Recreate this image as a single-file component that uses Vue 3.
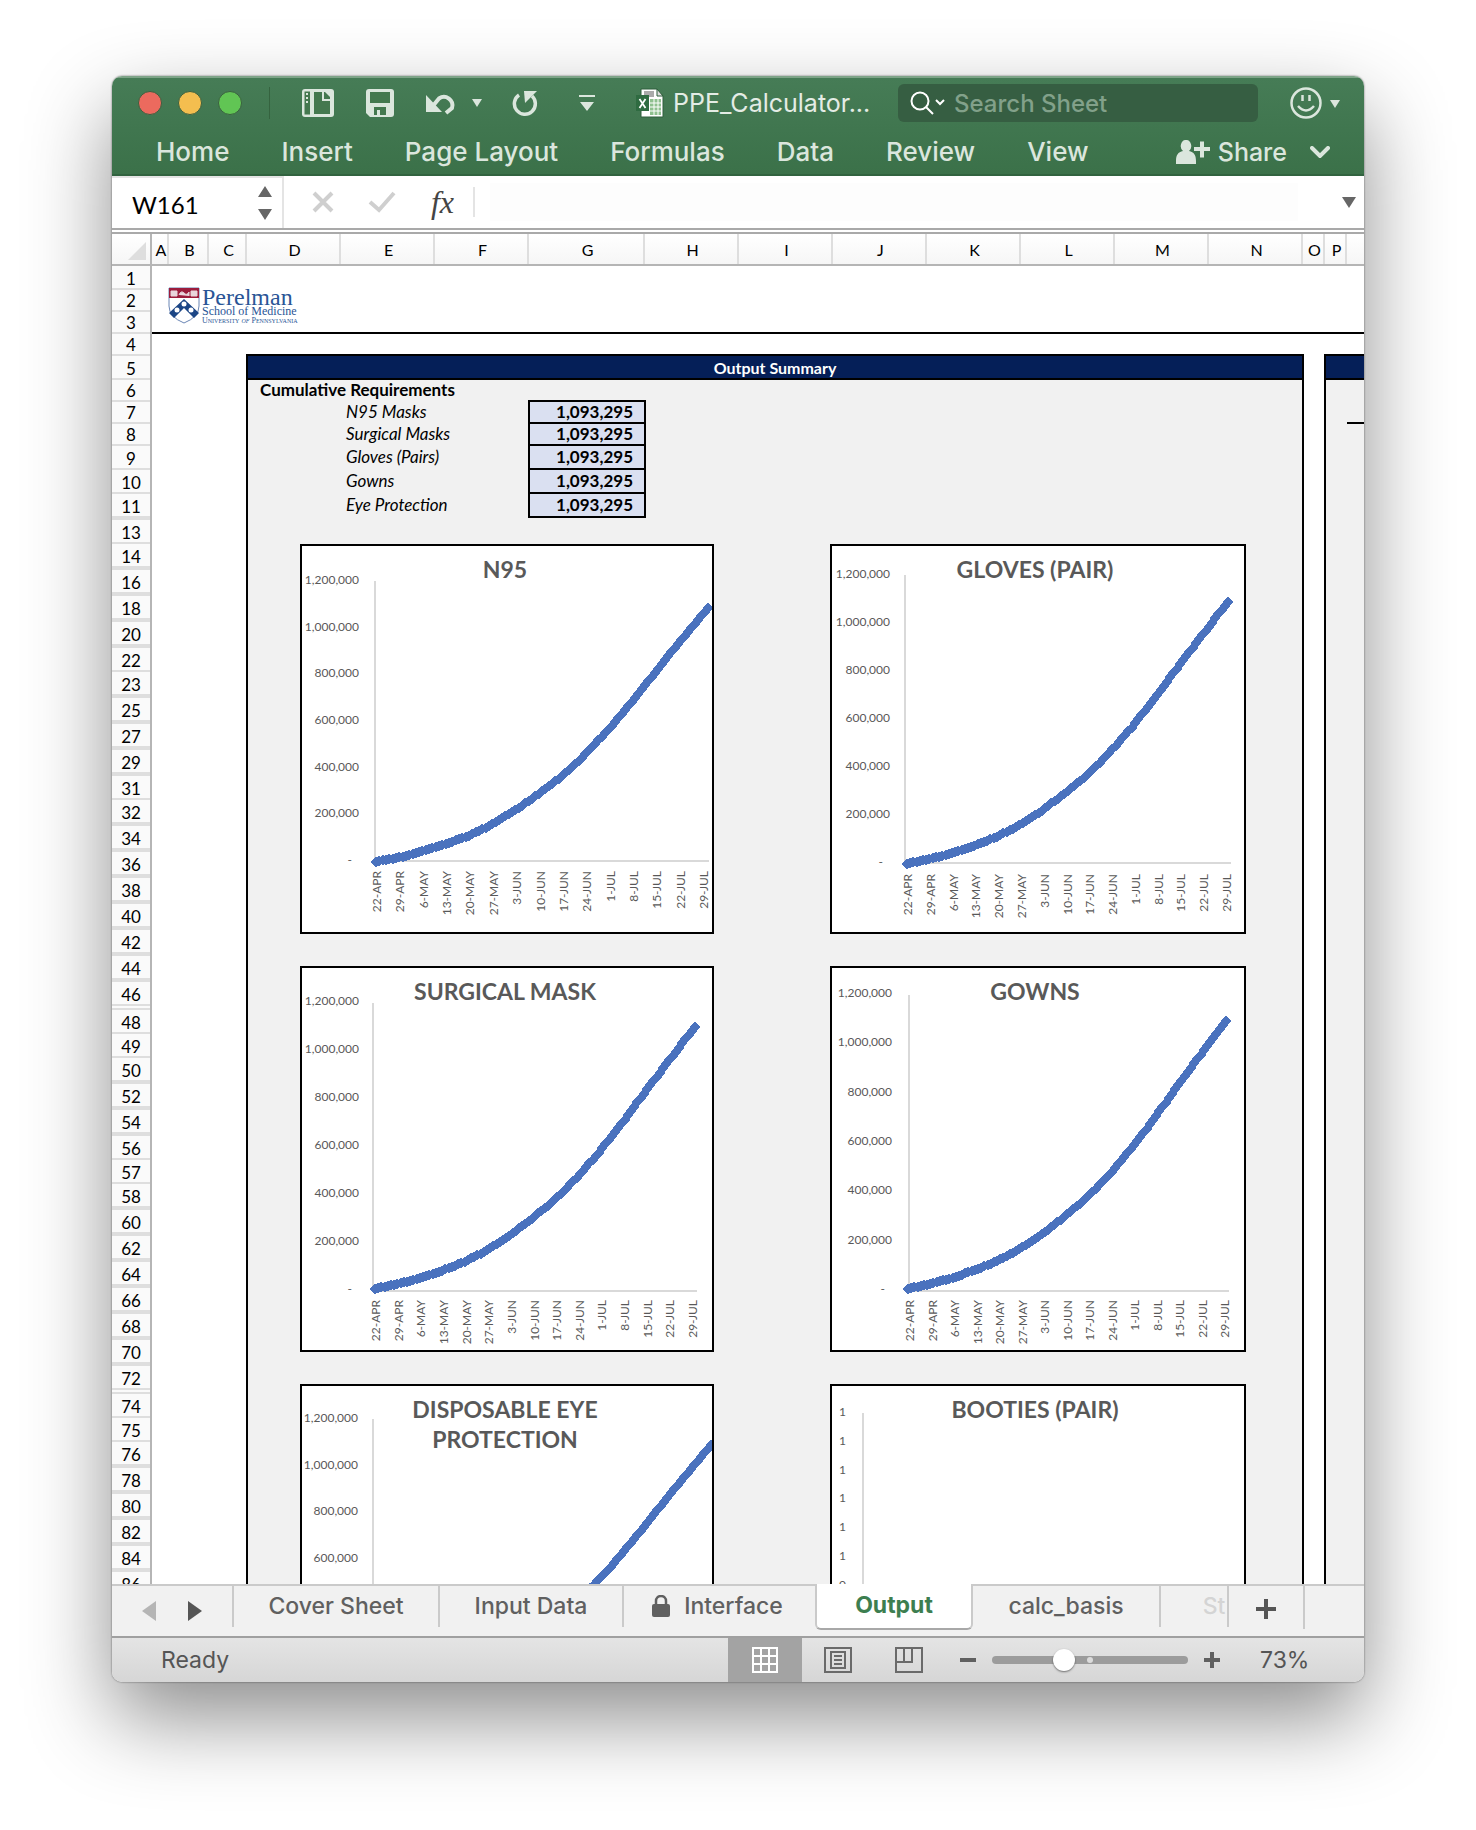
<script setup>
import { ref } from 'vue'

const ribbonTabs = ['Home', 'Insert', 'Page Layout', 'Formulas', 'Data', 'Review', 'View']

const columns = [
  ['A', 17], ['B', 40], ['C', 38], ['D', 94], ['E', 94], ['F', 94], ['G', 116], ['H', 94],
  ['I', 94], ['J', 94], ['K', 94], ['L', 94], ['M', 94], ['N', 94], ['O', 22], ['P', 22], ['', 94],
].map(([label, width]) => ({ label, width }))

// Row headers: "short" rows are less tall; "gap" and "wide" mark hidden rows below.
const shortRows = [2, 3, 4, 6, 7, 8]
const wideRows = [46, 72]
const visibleRows = [
  1, 2, 3, 4, 5, 6, 7, 8, 9, 10, 11, 13, 14, 16, 18, 20, 22, 23, 25, 27, 29, 31, 32, 34, 36, 38,
  40, 42, 44, 46, 48, 49, 50, 52, 54, 56, 57, 58, 60, 62, 64, 66, 68, 70, 72, 74, 75, 76, 78, 80,
  82, 84, 86,
]
const rows = visibleRows.map((n, i) => {
  const hiddenBelow = visibleRows[i + 1] !== n + 1
  return {
    n,
    kind: shortRows.includes(n) ? 'short' : wideRows.includes(n) ? 'wide' : hiddenBelow ? 'gap' : '',
  }
})

const requirements = [
  ['N95 Masks', '1,093,295'],
  ['Surgical Masks', '1,093,295'],
  ['Gloves (Pairs)', '1,093,295'],
  ['Gowns', '1,093,295'],
  ['Eye Protection', '1,093,295'],
]

const dates = [
  '22-APR', '29-APR', '6-MAY', '13-MAY', '20-MAY', '27-MAY', '3-JUN', '10-JUN',
  '17-JUN', '24-JUN', '1-JUL', '8-JUL', '15-JUL', '22-JUL', '29-JUL',
]
const amounts = ['1,200,000', '1,000,000', '800,000', '600,000', '400,000', '200,000', '-']
const weekly = [2, 20, 46, 77, 114, 162, 223, 294, 371, 464, 571, 690, 817, 941, 1062, 1180]

function valueAt(day) {
  const i = Math.floor(day / 7)
  const t = day / 7 - i
  return weekly[i] * (1 - t) + weekly[i + 1] * t
}

function series(x0, x1, y0, y1) {
  const pts = []
  for (let day = 0; day <= 100; day++) {
    const x = Math.round(x0 + ((x1 - x0) * day) / 100)
    const y = Math.round(y0 - ((y0 - y1) * valueAt(day)) / 1096)
    pts.push([x, y])
  }
  return pts
}

const charts = [
  { title: ['N95'], w: 410, h: 386, axis: [73, 35, 315, 407], labels: [57, 34, 314], dates: [75, 402, 325], line: [74, 406, 316, 62] },
  { title: ['GLOVES (PAIR)'], w: 412, h: 386, axis: [73, 29, 317, 399], labels: [58, 28, 316], dates: [76, 395, 328], line: [75, 396, 318, 56] },
  { title: ['SURGICAL MASK'], w: 410, h: 382, axis: [71, 35, 323, 395], labels: [57, 33, 321], dates: [74, 391, 332], line: [73, 393, 321, 59] },
  { title: ['GOWNS'], w: 412, h: 382, axis: [77, 27, 323, 397], labels: [60, 25, 321], dates: [78, 393, 332], line: [76, 394, 321, 53] },
  { title: ['DISPOSABLE EYE', 'PROTECTION'], w: 410, h: 386, axis: [71, 33, 313, 407], labels: [56, 32, 312], dates: [75, 402, 325], line: [74, 409, 314, 59] },
  { title: ['BOOTIES (PAIR)'], w: 412, h: 386, axis: [31, 27, 315, 399], labels: [14, 26, 314], ticks: ['1', '1', '1', '1', '1', '1', '0', '0', '0', '0', '-'] },
].map((c) => {
  const ticks = c.ticks || amounts
  const [right, first, last] = c.labels
  const points = c.line ? series(...c.line) : []
  return {
    ...c,
    yLabels: ticks.map((text, i) => ({
      text,
      x: text === '-' ? right - 7 : right,
      y: Math.round(first + ((last - first) * i) / (ticks.length - 1)) + 4,
    })),
    xLabels: c.dates
      ? dates.map((text, i) => ({ text, x: Math.round(c.dates[0] + ((c.dates[1] - c.dates[0]) * i) / 14) + 4, y: c.dates[2] }))
      : [],
    path: points.map(([x, y]) => `M${x - 5} ${y}l5 -5l5 5l-5 5z`).join(''),
  }
})

const zoom = ref(35)
</script>

<template>
  <div class="page">
    <main class="window">
      <header class="titlebar">
        <div class="tools">
          <div class="lights">
            <button class="light close" aria-label="Close"></button>
            <button class="light minimize" aria-label="Minimize"></button>
            <button class="light full" aria-label="Full screen"></button>
          </div>
          <span class="tool-divider"></span>
          <button class="tool sidebar" aria-label="Workbook gallery">
            <svg width="32" height="28" viewBox="0 0 32 28"><rect width="32" height="28" rx="3" fill="#dbe6dd" /><path d="M8 2.500V25.500H2.500V2.500zM12 3h8v9h8v13H12z" fill="#44784f" /><path d="M22 3h1l5 5v2h-6z" fill="#44784f" /><path d="M4 5h2M4 9h2M4 13h2" stroke="#dbe6dd" stroke-width="2" /></svg>
          </button>
          <button class="tool save" aria-label="Save">
            <svg width="28" height="28" viewBox="0 0 28 28"><path d="M3 0h22a3 3 0 0 1 3 3v22a3 3 0 0 1-3 3H4l-4-4V3a3 3 0 0 1 3-3z" fill="#dbe6dd" /><path d="M4 3h20v11H4zM8 18h12v8h-6v-5h-3v5H8z" fill="#44784f" /></svg>
          </button>
          <button class="tool undo" aria-label="Undo">
            <svg width="31" height="24" viewBox="0 0 31 24"><path d="M6 16L13 7.500A8.500 8.500 0 0 1 26 17L20 22" fill="none" stroke="#dbe6dd" stroke-width="4" /><path d="M0 4v17h16z" fill="#dbe6dd" /></svg>
          </button>
          <button class="tool undo-more" aria-label="Undo history">
            <svg width="10" height="8" viewBox="0 0 10 8"><path d="M0 0h10L5 8z" fill="#dbe6dd" /></svg>
          </button>
          <button class="tool redo" aria-label="Repeat">
            <svg width="26" height="28" viewBox="0 0 26 28"><path d="M7 6A10.500 10.500 0 1 0 20 7" fill="none" stroke="#dbe6dd" stroke-width="3.500" /><path d="M12 2h13L13 14z" fill="#dbe6dd" /></svg>
          </button>
          <button class="tool customize" aria-label="Customize toolbar">
            <svg width="16" height="16" viewBox="0 0 16 16"><path d="M0 0h16v2H0zM1 7h14L8 16z" fill="#dbe6dd" /></svg>
          </button>
          <svg class="doc" width="28" height="30" viewBox="0 0 28 30"><path d="M5 1h16l6 7v21H5z" fill="#fff" stroke="#2f5f3c" /><path d="M8 3h10v6H8z" fill="#aaa" /><path d="M21 1v7h6z" fill="#ddd" stroke="#2f5f3c" /><path d="M14 11h11v16H14z" fill="#8fc08f" /><path d="M18 11v16M22 11v16M14 15h11M14 19h11M14 23h11" stroke="#fff" /><path d="M0 7h13v16H0z" fill="#2f6b41" /><path d="M3.500 11l6 9M9.500 11l-6 9" stroke="#fff" stroke-width="1.800" /></svg>
          <h1 class="doc-title">PPE_Calculator...</h1>
          <label class="search">
            <svg width="36" height="24" viewBox="0 0 36 24"><circle cx="10" cy="10" r="8.500" fill="none" stroke="#fff" stroke-width="2" /><path d="M16 16l7 7M26 9l4 4l4-4" fill="none" stroke="#fff" stroke-width="2" /></svg>
            <input type="search" placeholder="Search Sheet" aria-label="Search Sheet" />
          </label>
          <button class="tool smile" aria-label="Feedback">
            <svg width="50" height="32" viewBox="0 0 50 32"><circle cx="16" cy="16" r="14.500" fill="none" stroke="#dbe6dd" stroke-width="2.500" /><path d="M12.500 8v6M19.500 8v6M8 19q8 9 16 0" fill="none" stroke="#dbe6dd" stroke-width="2.500" /><path d="M40 13h10l-5 8z" fill="#dbe6dd" /></svg>
          </button>
        </div>
        <nav class="ribbon">
          <button v-for="t in ribbonTabs" :key="t" class="ribbon-tab">{{ t }}</button>
          <button class="share">
            <svg width="34" height="24" viewBox="0 0 34 24"><path d="M10 0a5 6 0 0 1 3 11c5 1 7 4 7 10v3H0v-3c0-6 2-9 7-10A5 6 0 0 1 10 0z" fill="#dbe6dd" /><path d="M18 9h16M26 1.500v16" stroke="#dbe6dd" stroke-width="4" /></svg>
            Share
          </button>
          <button class="collapse" aria-label="Collapse ribbon">
            <svg width="20" height="12" viewBox="0 0 20 12"><path d="M2 2l8 8l8-8" fill="none" stroke="#dbe6dd" stroke-width="4" stroke-linecap="round" /></svg>
          </button>
        </nav>
      </header>

      <section class="formula-bar">
        <div class="name-box">
          <input class="cell-name" value="W161" aria-label="Name box" />
          <svg width="14" height="34" viewBox="0 0 14 34"><path d="M0 11L7 0l7 11zM0 23h14L7 34z" fill="#666" /></svg>
        </div>
        <button class="fx-btn cancel" aria-label="Cancel">
          <svg width="22" height="22" viewBox="0 0 22 22"><path d="M2 2l18 18M20 2L2 20" stroke="#cfcfcf" stroke-width="4" /></svg>
        </button>
        <button class="fx-btn accept" aria-label="Enter">
          <svg width="28" height="22" viewBox="0 0 28 22"><path d="M2 11l9 8L26 2" fill="none" stroke="#cfcfcf" stroke-width="4" /></svg>
        </button>
        <button class="fx">fx</button>
        <input class="formula" aria-label="Formula" />
        <button class="expand" aria-label="Expand formula bar">
          <svg width="14" height="11" viewBox="0 0 14 11"><path d="M0 0h14L7 11z" fill="#666" /></svg>
        </button>
      </section>

      <section class="sheet">
        <div class="col-heads">
          <div class="corner"><svg width="18" height="18" viewBox="0 0 18 18"><path d="M18 0v18H0z" fill="#dedede" /></svg></div>
          <div v-for="(c, i) in columns" :key="i" class="col-head" :style="{ width: c.width + 'px' }">{{ c.label }}</div>
        </div>
        <div class="sheet-body">
          <div class="row-heads">
            <div v-for="r in rows" :key="r.n" class="row-head" :class="r.kind"><span>{{ r.n }}</span></div>
          </div>
          <div class="canvas">
            <div class="brand">
              <svg width="130" height="38" viewBox="0 0 130 38">
                <path d="M1 1h30v18q0 11-15 17q-15-6-15-17z" fill="#fff" stroke="#6b86b5" />
                <path d="M1 1h30v10H1z" fill="#9c1c3c" />
                <path d="M3 4h6v5H3zM23 4h6v5h-6zM11 8q2-5 5-2t5-1v4" fill="#e9d5dc" stroke="#e9d5dc" />
                <path d="M16 12L31 26l-5 5L16 21L6 31L1 26z" fill="#1b4585" />
                <circle cx="16" cy="17" r="2.500" fill="#fff" /><circle cx="9" cy="23" r="2.500" fill="#fff" /><circle cx="23" cy="23" r="2.500" fill="#fff" />
                <text x="34" y="18" font-size="24">Perelman</text>
                <text x="34" y="28" font-size="12">School of Medicine</text>
                <text x="34" y="36" font-size="8" class="small-caps">University <tspan font-style="italic">of</tspan> Pennsylvania</text>
              </svg>
            </div>
            <div class="panels">
              <section class="panel">
                <h2 class="panel-title">Output Summary</h2>
                <h3 class="panel-sub">Cumulative Requirements</h3>
                <table class="requirements">
                  <tbody>
                    <tr v-for="(r, i) in requirements" :key="r[0]" :class="{ tall: i > 1 }">
                      <th scope="row">{{ r[0] }}</th>
                      <td>{{ r[1] }}</td>
                    </tr>
                  </tbody>
                </table>
                <div class="charts">
                  <figure v-for="c in charts" :key="c.title[0]" class="chart">
                    <svg :width="c.w" :height="c.h" :viewBox="`0 0 ${c.w} ${c.h}`">
                      <path :d="`M${c.axis[0]} ${c.axis[1]}V${c.axis[2]}H${c.axis[3]}`" fill="none" stroke="#d9d9d9" stroke-width="2" />
                      <text v-for="(l, i) in c.yLabels" :key="'y' + i" class="tick" :x="l.x" :y="l.y" text-anchor="end">{{ l.text }}</text>
                      <text v-for="l in c.xLabels" :key="l.text" class="tick" text-anchor="end" :transform="`translate(${l.x} ${l.y}) rotate(-90)`">{{ l.text }}</text>
                      <path :d="c.path" fill="#4a72be" stroke="#4a72be" />
                      <text v-for="(t, i) in c.title" :key="t" class="chart-title" x="203" :y="32 + i * 30" text-anchor="middle">{{ t }}</text>
                    </svg>
                  </figure>
                </div>
              </section>
              <section class="panel side">
                <div class="panel-title"></div>
                <div class="side-rule"></div>
              </section>
            </div>
          </div>
        </div>
      </section>

      <nav class="tabs">
        <div class="tab-nav">
          <button aria-label="Previous sheet"><svg width="14" height="20" viewBox="0 0 14 20"><path d="M14 0v20L0 10z" fill="#b5b5b5" /></svg></button>
          <button aria-label="Next sheet"><svg width="14" height="20" viewBox="0 0 14 20"><path d="M0 0v20l14-10z" fill="#555" /></svg></button>
        </div>
        <button class="tab cover">Cover Sheet</button>
        <button class="tab input-data">Input Data</button>
        <button class="tab interface">
          <svg width="18" height="22" viewBox="0 0 18 22"><path d="M4 10V6a5 5 0 0 1 10 0v4" fill="none" stroke="#606060" stroke-width="2.500" /><rect y="9" width="18" height="13" rx="2" fill="#606060" /></svg>
          Interface
        </button>
        <button class="tab active">Output</button>
        <button class="tab calc">calc_basis</button>
        <button class="tab more">St</button>
        <button class="tab add" aria-label="New sheet"><svg width="20" height="20" viewBox="0 0 20 20"><path d="M0 10h20M10 0v20" stroke="#555" stroke-width="4" /></svg></button>
      </nav>

      <footer class="status">
        <span class="ready">Ready</span>
        <button class="view selected" aria-label="Normal view"><svg width="26" height="26" viewBox="0 0 26 26"><path d="M1 1h24v24H1zM9 1v24M17 1v24M1 9h24M1 17h24" fill="none" stroke="#fff" stroke-width="2" /></svg></button>
        <button class="view" aria-label="Page layout"><svg width="28" height="26" viewBox="0 0 28 26"><path d="M1 1h26v24H1zM7 5h14v16H7zM10 9h8M10 13h8M10 17h8" fill="none" stroke="#6a6a6a" stroke-width="2" /></svg></button>
        <button class="view" aria-label="Page break preview"><svg width="28" height="26" viewBox="0 0 28 26"><path d="M1 1h26v24H1zM1 15h16V1M9 1v14" fill="none" stroke="#6a6a6a" stroke-width="2" /></svg></button>
        <button class="step" aria-label="Zoom out"><svg width="16" height="16" viewBox="0 0 16 16"><path d="M0 8h16" stroke="#606060" stroke-width="4" /></svg></button>
        <label class="slider"><input v-model="zoom" type="range" min="0" max="100" aria-label="Zoom" /><i></i></label>
        <button class="step" aria-label="Zoom in"><svg width="16" height="16" viewBox="0 0 16 16"><path d="M0 8h16M8 0v16" stroke="#606060" stroke-width="4" /></svg></button>
        <span class="percent">73%</span>
      </footer>
    </main>
  </div>
</template>

<style>
body {
  margin: 0;
  background: #fff;
}
</style>

<style scoped>
* {
  box-sizing: border-box;
}
svg {
  display: block;
  flex: none;
}
button,
input {
  margin: 0;
  padding: 0;
  border: 0;
  background: none;
  font: inherit;
  color: inherit;
  outline: none;
}
h1,
h2,
h3,
figure {
  margin: 0;
}
.page {
  height: 100vh;
  padding: 76px 112px 148px;
  overflow: hidden;
}
.window {
  display: flex;
  flex-direction: column;
  height: 100%;
  border-radius: 10px;
  overflow: hidden;
  background: #fff;
  font-family: Inter, "Liberation Sans", sans-serif;
  box-shadow: 0 0 2px rgba(0, 0, 0, 0.6), 0 36px 84px rgba(0, 0, 0, 0.45);
}

/* Title bar and ribbon */
.titlebar {
  flex: none;
  height: 100px;
  background: linear-gradient(#467c56, #3b7149);
  border-top: 2px solid #7ea488;
  border-bottom: 2px solid #31633f;
  color: #dbe6dd;
}
.tools {
  display: flex;
  align-items: center;
  height: 50px;
  padding-left: 26px;
}
.lights {
  display: flex;
  gap: 16px;
}
.light {
  width: 24px;
  height: 24px;
  border-radius: 50%;
  border: 1px solid #3a6040;
}
.close { background: #ec6a5e; }
.minimize { background: #f4be4f; }
.full { background: #61c554; }
.tool-divider {
  width: 1px;
  height: 32px;
  margin: 0 32px 0 27px;
  background: #35633f;
}
.save { margin-left: 32px; }
.undo { margin-left: 32px; }
.undo-more { margin-left: 15px; }
.redo { margin-left: 30px; }
.customize { margin-left: 41px; }
.doc { margin-left: 41px; }
.doc-title {
  flex: 1;
  margin-left: 9px;
  font-size: 25px;
  line-height: 30px;
  font-weight: 400;
  color: #e4ece5;
  white-space: nowrap;
}
.search {
  display: flex;
  align-items: center;
  width: 360px;
  height: 38px;
  padding-left: 12px;
  border-radius: 6px;
  background: #365e42;
}
.search input {
  flex: 1;
  min-width: 0;
  margin-left: 8px;
  font-size: 24px;
  font-weight: 500;
}
.search input::placeholder {
  color: #82a18a;
  opacity: 1;
}
.smile { margin: 0 24px 0 32px; }
.ribbon {
  display: flex;
  align-items: center;
  height: 48px;
  padding-left: 18px;
  font-size: 26px;
  line-height: 30px;
  font-weight: 500;
}
.ribbon-tab {
  padding: 0 26px;
  white-space: nowrap;
}
.share {
  display: flex;
  align-items: center;
  gap: 8px;
  margin-left: auto;
  font-size: 25px;
}
.collapse { margin: 0 34px 0 23px; }

/* Formula bar */
.formula-bar {
  display: flex;
  flex: none;
  align-items: center;
  height: 52px;
  color: #000;
}
.name-box {
  display: flex;
  align-items: center;
  width: 172px;
  height: 52px;
  padding: 0 10px 0 20px;
  border: solid #e4e4e4;
  border-width: 2px 2px 0 0;
}
.cell-name {
  flex: 1;
  min-width: 0;
  padding-top: 2px;
  font-family: Lato, sans-serif;
  font-size: 24px;
}
.cancel { margin-left: 28px; }
.accept { margin-left: 34px; }
.fx {
  width: 48px;
  height: 30px;
  margin-left: 31px;
  padding-right: 15px;
  border-right: 2px solid #e4e4e4;
  font: italic 32px/26px "Liberation Serif", serif;
  color: #444;
}
.formula {
  flex: 1;
  min-width: 0;
  height: 38px;
  margin: 0 44px 0 15px;
  background: #fdfdfd;
}
.expand { margin-right: 8px; }

/* Sheet */
.sheet {
  display: flex;
  flex: 1;
  flex-direction: column;
  min-height: 0;
  overflow: hidden;
  border-top: 6px double #a9a9a9;
  font-family: Lato, sans-serif;
}
.col-heads {
  display: flex;
  flex: none;
  height: 32px;
  border-bottom: 2px solid #b5b5b5;
  background: linear-gradient(#fff, #f6f6f6);
  overflow: hidden;
}
.corner {
  display: flex;
  flex: none;
  align-items: flex-end;
  justify-content: flex-end;
  width: 40px;
  padding: 0 4px 4px 0;
  border-right: 2px solid #b5b5b5;
}
.col-head {
  flex: none;
  padding-left: 3px;
  border-right: 2px solid #dedede;
  font-size: 16px;
  line-height: 32px;
  text-align: center;
  white-space: nowrap;
}
.sheet-body {
  display: flex;
  flex: 1;
  min-height: 0;
  overflow: hidden;
}
.row-heads {
  flex: none;
  width: 40px;
  border-right: 2px solid #b5b5b5;
  background: #fafafa;
}
.row-head {
  display: flex;
  align-items: flex-end;
  height: 24px;
  border-bottom: 2px solid #dedede;
  font-size: 17px;
  line-height: 18px;
}
.row-head span {
  width: 100%;
  text-align: center;
}
.row-head.short { height: 22px; }
.row-head.gap {
  height: 26px;
  border-bottom-width: 4px;
}
.row-head.wide {
  height: 28px;
  border-bottom: 6px double #dedede;
}
.canvas {
  display: flex;
  flex: 1;
  flex-direction: column;
  min-width: 0;
  background: #fff;
}
.brand {
  flex: none;
  height: 68px;
  padding: 21px 0 0 16px;
  border-bottom: 2px solid #000;
}
.brand text {
  font-family: "Liberation Serif", serif;
  fill: #2a5596;
}
.brand .small-caps { font-variant: small-caps; }
.panels {
  display: flex;
  flex: 1;
  gap: 20px;
  min-height: 0;
  padding: 20px 0 0 94px;
}
.panel {
  flex: none;
  width: 1058px;
  border: solid #000;
  border-width: 2px 2px 0;
  background: #f1f1f1;
}
.panel.side {
  flex: 1;
  width: auto;
  border-right: 0;
}
.panel-title {
  height: 24px;
  border-bottom: 2px solid #000;
  background: #051f58;
  color: #fff;
  font-size: 16px;
  line-height: 24px;
  font-weight: 700;
  text-align: center;
}
.side-rule {
  height: 44px;
  margin-left: 21px;
  border-bottom: 2px solid #000;
}
.panel-sub {
  height: 20px;
  padding-left: 12px;
  font-size: 17px;
  line-height: 20px;
  font-weight: 700;
}
.requirements {
  margin-left: 98px;
  border-collapse: collapse;
  font-size: 17px;
  line-height: 20px;
}
.requirements tr { height: 22px; }
.requirements tr.tall { height: 24px; }
.requirements th {
  width: 183px;
  padding: 0;
  font-style: italic;
  font-weight: 400;
  text-align: left;
}
.requirements td {
  width: 116px;
  padding: 0 11px 0 0;
  border: 2px solid #000;
  background: #dae0f1;
  font-weight: 700;
  text-align: right;
}
.charts {
  display: grid;
  grid-template-columns: auto auto;
  gap: 32px 116px;
  justify-content: start;
  margin: 26px 0 0 52px;
}
.chart {
  border: 2px solid #000;
  background: #fff;
}
.tick {
  font-size: 12px;
  fill: #595959;
}
.chart-title {
  font-size: 23px;
  font-weight: 700;
  fill: #595959;
}

/* Sheet tabs */
.tabs {
  display: flex;
  flex: none;
  height: 52px;
  background: #f1f1f1;
  color: #606060;
  font-size: 23px;
  line-height: 28px;
}
.tab-nav {
  display: flex;
  align-items: center;
  gap: 32px;
  width: 120px;
  padding-left: 30px;
  border-top: 2px solid #cacaca;
}
.tab {
  display: flex;
  align-items: center;
  justify-content: center;
  gap: 14px;
  height: 43px;
  padding-bottom: 2px;
  border: solid #cacaca;
  border-width: 2px 0 0 2px;
  font-weight: 500;
  white-space: nowrap;
}
.cover { width: 206px; }
.input-data { width: 184px; }
.interface {
  width: 193px;
  padding-right: 4px;
}
.tab.active {
  width: 158px;
  height: 46px;
  border-width: 0 2px 2px;
  border-radius: 0 0 6px 6px;
  border-bottom-color: #a8a8a8;
  background: #fff;
  color: #3d7e50;
  font-weight: 700;
}
.calc {
  width: 186px;
  border-left: 0;
}
.more {
  width: 68px;
  padding-left: 40px;
  color: #d4d4d4;
  overflow: hidden;
}
.add {
  width: 76px;
  padding-top: 6px;
}
.tabs::after {
  content: "";
  flex: 1;
  height: 43px;
  border: solid #cacaca;
  border-width: 2px 0 0 2px;
}

/* Status bar */
.status {
  display: flex;
  flex: none;
  align-items: center;
  height: 46px;
  border-top: 2px solid #a0a0a0;
  background: linear-gradient(#e4e4e4, #d6d6d6);
  color: #555;
  font-size: 23px;
}
.ready {
  flex: 1;
  padding-left: 49px;
}
.view {
  display: flex;
  align-items: center;
  justify-content: center;
  width: 71px;
  height: 44px;
}
.view.selected {
  width: 74px;
  background: #a3a3a3;
}
.step { margin: 0 16px; }
.slider {
  position: relative;
  width: 196px;
  height: 24px;
}
.slider input {
  display: block;
  width: 100%;
  height: 24px;
  appearance: none;
}
.slider input::-webkit-slider-runnable-track {
  height: 8px;
  border-radius: 4px;
  background: #9c9c9c;
}
.slider input::-webkit-slider-thumb {
  width: 22px;
  height: 22px;
  margin-top: -7px;
  border: 0;
  border-radius: 50%;
  background: #fff;
  box-shadow: 0 1px 2px rgba(0, 0, 0, 0.5);
  appearance: none;
}
.slider i {
  position: absolute;
  left: 50%;
  top: 9px;
  width: 6px;
  height: 6px;
  margin-left: -3px;
  border-radius: 50%;
  background: #dcdcdc;
}
.percent {
  width: 128px;
  padding-left: 24px;
}
</style>
